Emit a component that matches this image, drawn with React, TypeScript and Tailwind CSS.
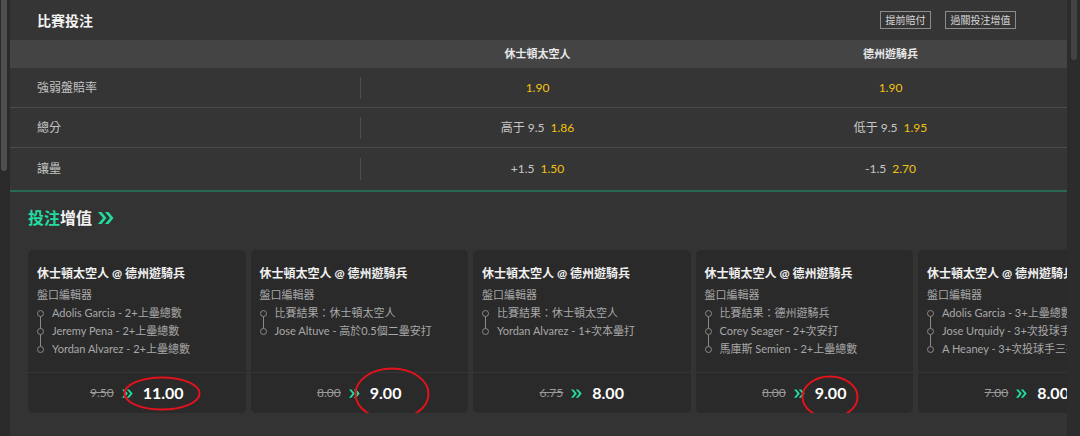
import React from 'react';

const font = { fontFamily: 'Lato, "Noto Sans CJK TC", "Noto Sans", sans-serif' };

type Ring = { w: number; h: number; dx: number; dy: number };

type Card = {
  legs: string[];
  oldOdds: string;
  newOdds: string;
  ring?: Ring;
};

const cards: Card[] = [
  {
    legs: ['Adolis Garcia - 2+上壘總數', 'Jeremy Pena - 2+上壘總數', 'Yordan Alvarez - 2+上壘總數'],
    oldOdds: '9.50',
    newOdds: '11.00',
    ring: { w: 78, h: 35, dx: -1, dy: 0 },
  },
  {
    legs: ['比賽結果：休士頓太空人', 'Jose Altuve - 高於0.5個二壘安打'],
    oldOdds: '8.00',
    newOdds: '9.00',
    ring: { w: 76, h: 54, dx: 6, dy: 1 },
  },
  {
    legs: ['比賽結果：休士頓太空人', 'Yordan Alvarez - 1+次本壘打'],
    oldOdds: '6.75',
    newOdds: '8.00',
  },
  {
    legs: ['比賽結果：德州遊騎兵', 'Corey Seager - 2+次安打', '馬庫斯 Semien - 2+上壘總數'],
    oldOdds: '8.00',
    newOdds: '9.00',
    ring: { w: 58, h: 44, dx: -1, dy: 4 },
  },
  {
    legs: ['Adolis Garcia - 3+上壘總數', 'Jose Urquidy - 3+次投球手三振', 'A Heaney - 3+次投球手三振'],
    oldOdds: '7.00',
    newOdds: '8.00',
  },
];

const rows = [
  { label: '強弱盤賠率', a: ['', '1.90'], b: ['', '1.90'] },
  { label: '總分', a: ['高于 9.5', '1.86'], b: ['低于 9.5', '1.95'] },
  { label: '讓壘', a: ['+1.5', '1.50'], b: ['-1.5', '2.70'] },
];

function Chevrons({ className }: { className: string }) {
  return (
    <svg viewBox="0 0 16 12" className={className} fill="currentColor">
      <path d="M0 0h3.5l5 6-5 6H0l5-6z" />
      <path d="M7 0h3.5l5 6-5 6H7l5-6z" />
    </svg>
  );
}

function Odds({ pre, price }: { pre: string; price: string }) {
  return (
    <div className="flex items-center justify-center gap-[6px] text-[12px]">
      {pre && <span className="text-[#c8c8c8]">{pre}</span>}
      <span className="text-[#f2c30f]">{price}</span>
    </div>
  );
}

function BoostCard({ card }: { card: Card }) {
  const n = card.legs.length;
  return (
    <div className="flex h-[163px] w-[217.5px] shrink-0 flex-col rounded-[5px] bg-[#2a2a2a]">
      <div className="flex-1 overflow-hidden px-[9px] pt-[15px]">
        <div className="whitespace-nowrap text-[12px] font-bold leading-[18px] text-[#f0f0f0]">休士頓太空人 @ 德州遊騎兵</div>
        <div className="mt-[3px] text-[11px] leading-[18px] text-[#a8a8a8]">盤口編輯器</div>
        <div className="relative">
          {n > 1 && (
            <div
              className="absolute left-[3px] top-[9px] w-px bg-[#8a8a8a]"
              style={{ height: (n - 1) * 18 }}
            />
          )}
          {card.legs.map((leg) => (
            <div key={leg} className="flex h-[18px] items-center gap-[8px] whitespace-nowrap">
              <span className="relative h-[7px] w-[7px] shrink-0 rounded-full border border-[#8a8a8a] bg-[#2a2a2a]" />
              <span className="text-[11px] text-[#a8a8a8]">{leg}</span>
            </div>
          ))}
        </div>
      </div>
      <div className="flex h-[41px] items-center justify-center gap-[8px] border-t border-[#353535]">
        <span className="text-[12px] text-[#9a9a9a] line-through">{card.oldOdds}</span>
        <Chevrons className="h-[9px] w-[11px] text-[#1fe0a0]" />
        <span className="relative ml-[2px] text-[16px] font-bold text-white">
          {card.newOdds}
          {card.ring && (
            <svg
              className="pointer-events-none absolute left-1/2 top-1/2"
              width={card.ring.w}
              height={card.ring.h}
              style={{
                marginLeft: -card.ring.w / 2 + card.ring.dx,
                marginTop: -card.ring.h / 2 + card.ring.dy,
              }}
            >
              <ellipse
                cx={card.ring.w / 2}
                cy={card.ring.h / 2}
                rx={card.ring.w / 2 - 1.5}
                ry={card.ring.h / 2 - 1.5}
                fill="none"
                stroke="#e3121c"
                strokeWidth="2"
              />
            </svg>
          )}
        </span>
      </div>
    </div>
  );
}

export default function App() {
  return (
    <div className="flex h-[436px] w-[1080px] overflow-hidden bg-[#2b2b2b]" style={font}>
      {/* left scroll strip */}
      <div className="w-[10px] shrink-0 bg-[#2a2a2a]">
        <div className="ml-[1px] h-[171px] w-[6px] rounded-b-[3px] bg-[#4f4f4f]" />
      </div>

      <div className="flex w-[1057px] shrink-0 flex-col bg-[#353535]">
        {/* header */}
        <div className="flex h-[40px] items-center justify-between pl-[27px] pr-[51px]">
          <div className="text-[14px] font-bold text-[#f2f2f2]">比賽投注</div>
          <div className="flex items-center gap-[14px]">
            <div className="flex h-[18px] items-center border border-[#8c8c8c] px-[4.5px] text-[10px] text-[#d8d8d8]">提前賠付</div>
            <div className="flex h-[18px] items-center border border-[#8c8c8c] px-[4.5px] text-[10px] text-[#d8d8d8]">過關投注增值</div>
          </div>
        </div>

        {/* table */}
        <div className="grid h-[28px] grid-cols-[351px_353px_353px] items-center bg-[#444444] text-[11px] font-bold text-[#e8e8e8]">
          <div />
          <div className="text-center">休士頓太空人</div>
          <div className="text-center">德州遊騎兵</div>
        </div>
        {rows.map((r, i) => (
          <div
            key={r.label}
            className={`grid grid-cols-[351px_353px_353px] items-center ${i === 2 ? 'h-[42px]' : 'h-[40px] border-b border-[#4a4a4a]'}`}
          >
            <div className="relative h-full">
              <div className="flex h-full items-center pl-[27px] text-[12px] text-[#c4c4c4]">{r.label}</div>
              <div className="absolute right-0 top-1/2 h-[22px] w-px -translate-y-1/2 bg-[#4e4e4e]" />
            </div>
            <Odds pre={r.a[0]} price={r.a[1]} />
            <Odds pre={r.b[0]} price={r.b[1]} />
          </div>
        ))}
        <div className="h-[2px] bg-[#2a6a55]" />

        {/* boosts */}
        <div className="flex flex-1 flex-col bg-[#333333] pl-[18px]">
          <div className="flex h-[58px] items-start gap-[6px] pt-[16px]">
            <span className="text-[16px] font-bold leading-[20px]">
              <span className="text-[#22dca0]">投注</span>
              <span className="text-[#f2f2f2]">增值</span>
            </span>
            <Chevrons className="mt-[4px] h-[12px] w-[16px] text-[#22dca0]" />
          </div>
          <div className="flex gap-[5px] overflow-hidden">
            {cards.map((c, i) => (
              <BoostCard key={i} card={c} />
            ))}
          </div>
        </div>
      </div>

      {/* right scroll strip */}
      <div className="flex-1 bg-[#2c2c2c]">
        <div className="ml-[4px] h-[60px] w-[6px] rounded-b-[3px] bg-[#434343]" />
      </div>
    </div>
  );
}
